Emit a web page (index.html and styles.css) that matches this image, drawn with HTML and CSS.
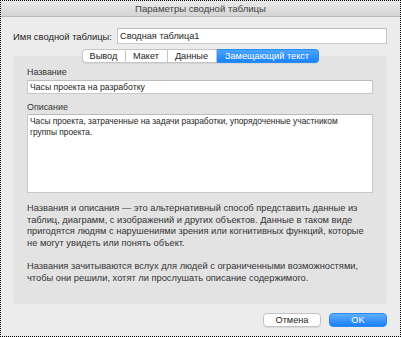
FILE: index.html
```html
<!DOCTYPE html>
<html lang="ru">
<head>
    <meta charset="UTF-8">
    <meta name="viewport" content="width=device-width, initial-scale=1.0">
    <title>Параметры сводной таблицы</title>
    <link rel="stylesheet" href="styles.css">
</head>
<body>

    <div class="window">
        <div class="titlebar">Параметры сводной таблицы</div>

        <div class="content">
            <div class="name-row">
                <label class="name-label" for="pt-name">Имя сводной таблицы:</label>
                <input class="field name-field" id="pt-name" type="text" value="Сводная таблица1">
            </div>

            <div class="tabs">
                <button class="tab tab-output">Вывод</button>
                <button class="tab tab-layout">Макет</button>
                <button class="tab tab-data">Данные</button>
                <button class="tab tab-alt selected">Замещающий текст</button>
            </div>

            <div class="panel">
                <label class="field-label" for="alt-title">Название</label>
                <input class="field title-field" id="alt-title" type="text" value="Часы проекта на разработку">

                <label class="field-label desc-label" for="alt-desc">Описание</label>
                <textarea class="field desc-field" id="alt-desc">Часы проекта, затраченные на задачи разработки, упорядоченные участником
группы проекта.</textarea>

                <p class="hint">Названия и описания — это альтернативный способ представить данные из<br>таблиц, диаграмм, с изображений и других объектов. Данные в таком виде<br>пригодятся людям с нарушениями зрения или когнитивных функций, которые<br>не могут увидеть или понять объект.</p>
                <p class="hint">Названия зачитываются вслух для людей с ограниченными возможностями,<br>чтобы они решили, хотят ли прослушать описание содержимого.</p>
            </div>

            <div class="actions">
                <button class="btn btn-cancel">Отмена</button>
                <button class="btn btn-ok">OK</button>
            </div>
        </div>
    </div>

</body>
</html>
```

FILE: styles.css
```css
body {
    margin: 0;
    font-family: "Liberation Sans", Arial, sans-serif;
    font-size: 9.3px;
    color: #2a2a2a;
}

.window {
    width: 401px;
    height: 337px;
    box-sizing: border-box;
    border: 1px dotted #000;
    background: #ececec;
    display: flex;
    flex-direction: column;
}

.titlebar {
    height: 15px;
    line-height: 15px;
    font-size: 9.6px;
    color: #444;
    text-align: center;
    background: linear-gradient(#e9e9e9, #d4d4d4);
    border-bottom: 1px solid #b8b8b8;
}

.content {
    padding: 0 13px 0 12px;
}

.name-row {
    display: flex;
    align-items: center;
    margin-top: 11px;
}

.name-label {
    flex: none;
    width: 104px;
    white-space: nowrap;
    font-size: 9.4px;
    color: #1e1e1e;
}

.field {
    box-sizing: border-box;
    border: 1px solid #c9c9c9;
    border-top-color: #bcbcbc;
    background: #fff;
    font-family: inherit;
    color: #1e1e1e;
    margin: 0;
    outline: none;
}

.name-field {
    flex: 1;
    height: 16px;
    padding: 0 2px;
    font-size: 9.2px;
}

.tabs {
    display: flex;
    justify-content: center;
    margin-top: 5px;
    margin-bottom: -7px;
    position: relative;
    z-index: 1;
}

.tab {
    height: 14px;
    padding: 0;
    border: 1px solid #c5c5c5;
    border-left: none;
    background: #fff;
    font-family: inherit;
    font-size: 9.2px;
    color: #1e1e1e;
    line-height: 12px;
    box-shadow: 0 1px 1px rgba(0, 0, 0, 0.06);
}

.tab:first-child {
    border-left: 1px solid #c5c5c5;
    border-radius: 4px 0 0 4px;
}

.tab:last-child {
    border-radius: 0 4px 4px 0;
}

.tab-output { width: 44px; }
.tab-layout { width: 42px; }
.tab-data { width: 49px; }
.tab-alt { width: 102px; }

.tab.selected {
    background: linear-gradient(#4aa4fe, #1b84f9);
    border-color: #2a8cf7;
    color: #fff;
}

.panel {
    background: #e3e3e3;
    border-radius: 4px;
    padding: 10px 14px 20px;
    display: flex;
    flex-direction: column;
}

.field-label {
    line-height: 12px;
    font-size: 8.9px;
    color: #333;
}

.title-field {
    height: 14px;
    margin-top: 2px;
    padding: 0 2px;
    font-size: 8.7px;
}

.desc-label {
    margin-top: 7px;
}

.desc-field {
    height: 79px;
    margin-top: 1px;
    padding: 1px 2px;
    font-size: 8.4px;
    line-height: 11px;
    resize: none;
}

.hint {
    margin: 10px 0 0;
    line-height: 11.5px;
    color: #333;
    white-space: nowrap;
}

.hint + .hint {
    margin-top: 12px;
}

.actions {
    display: flex;
    justify-content: flex-end;
    gap: 8px;
    margin-top: 9px;
}

.btn {
    width: 58px;
    height: 14px;
    padding: 0;
    border-radius: 4px;
    font-family: inherit;
    font-size: 9.2px;
    line-height: 12px;
}

.btn-cancel {
    background: #fff;
    border: 1px solid #c4c4c4;
    color: #1e1e1e;
    box-shadow: 0 1px 1px rgba(0, 0, 0, 0.08);
}

.btn-ok {
    background: linear-gradient(#5eaefe, #1a80f6);
    border: 1px solid #2b88f0;
    color: #fff;
}
```
